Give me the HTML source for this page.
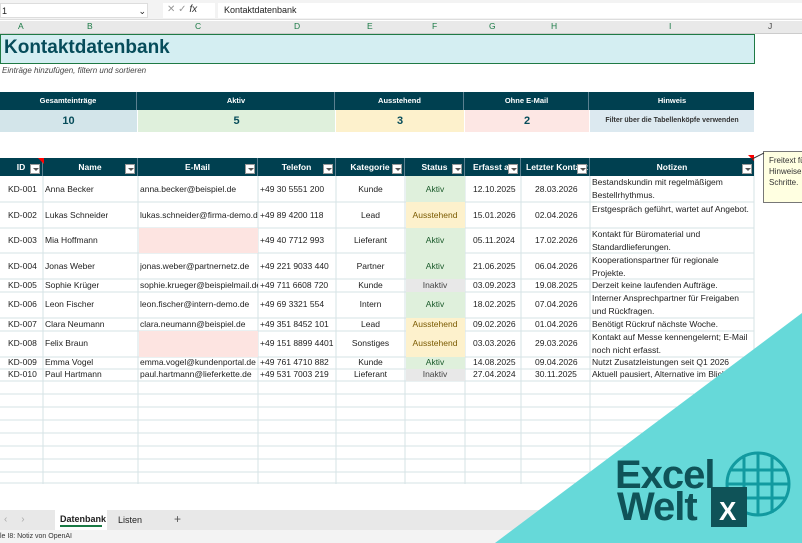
<!DOCTYPE html><html><head><style>
*{margin:0;padding:0;box-sizing:border-box}
body{width:802px;height:543px;overflow:hidden;background:#fff;font-family:"Liberation Sans",sans-serif;font-size:9px;color:#222;position:relative}
.a{position:absolute}
.hd{background:#004050;color:#fff;font-weight:bold;text-align:center}
.dd{position:absolute;right:2px;bottom:2px;width:10px;height:10px;background:#fff;border:1px solid #999}
.dd:after{content:"";position:absolute;left:2px;top:3px;border:3px solid transparent;border-top:3px solid #555}
.c{position:absolute;font-size:8.5px;white-space:nowrap;overflow:hidden}
</style></head><body>
<div class="a" style="left:0;top:0;width:802px;height:20px;background:#f3f3f3;border-bottom:1px solid #ddd"></div>
<div class="a" style="left:0;top:3px;width:148px;height:15px;background:#fff;border:1px solid #ddd;font-size:9px;padding:2px 1px">1<span style="float:right">⌄</span></div>
<div class="a" style="left:163px;top:3px;width:52px;height:15px;background:#fff;color:#999;font-size:10px;padding:1px 4px">✕ ✓ <i style="color:#333">fx</i></div>
<div class="a" style="left:218px;top:3px;width:584px;height:15px;background:#fff;font-size:9px;padding:2px 6px">Kontaktdatenbank</div>
<div class="a" style="left:0;top:21px;width:802px;height:13px;background:#e9e9e9;border-bottom:1px solid #ccc"></div>
<div class="a" style="left:0;top:21px;width:802px;height:13px;font-size:8.5px;color:#1a7a45">
<span class="a" style="left:18px">A</span><span class="a" style="left:87px">B</span><span class="a" style="left:195px">C</span><span class="a" style="left:294px">D</span><span class="a" style="left:367px">E</span><span class="a" style="left:432px">F</span><span class="a" style="left:489px">G</span><span class="a" style="left:551px">H</span><span class="a" style="left:669px">I</span><span class="a" style="left:768px;color:#444">J</span></div>
<div class="a" style="left:0;top:34px;width:755px;height:30px;background:#d4eef2;border:1.5px solid #1f7a45"></div>
<div class="a" style="left:4px;top:37px;font-size:19px;font-weight:bold;color:#064c5a">Kontaktdatenbank</div>
<div class="a" style="left:2px;top:66px;font-size:8px;font-style:italic;color:#444">Einträge hinzufügen, filtern und sortieren</div>
<!-- KPIs -->
<div class="a hd" style="left:0;top:92px;width:754px;height:18px"></div>
<div class="a" style="left:0;top:92px;width:754px;height:40px;font-size:7.5px;font-weight:bold">
<div class="a" style="left:0;top:0;width:137px;height:18px;color:#fff;text-align:center;line-height:18px;border-right:1px solid #5a8090">Gesamteinträge</div>
<div class="a" style="left:138px;top:0;width:197px;height:18px;color:#fff;text-align:center;line-height:18px;border-right:1px solid #5a8090">Aktiv</div>
<div class="a" style="left:336px;top:0;width:128px;height:18px;color:#fff;text-align:center;line-height:18px;border-right:1px solid #5a8090">Ausstehend</div>
<div class="a" style="left:465px;top:0;width:124px;height:18px;color:#fff;text-align:center;line-height:18px;border-right:1px solid #5a8090">Ohne E-Mail</div>
<div class="a" style="left:590px;top:0;width:164px;height:18px;color:#fff;text-align:center;line-height:18px">Hinweis</div>
<div class="a" style="left:0;top:18px;width:137px;height:22px;background:#d3e5ea;text-align:center;line-height:22px;font-size:11px;color:#064c5a">10</div>
<div class="a" style="left:138px;top:18px;width:197px;height:22px;background:#dff0dc;text-align:center;line-height:22px;font-size:11px;color:#064c5a">5</div>
<div class="a" style="left:336px;top:18px;width:128px;height:22px;background:#fdf1cc;text-align:center;line-height:22px;font-size:11px;color:#064c5a">3</div>
<div class="a" style="left:465px;top:18px;width:124px;height:22px;background:#fde7e4;text-align:center;line-height:22px;font-size:11px;color:#064c5a">2</div>
<div class="a" style="left:590px;top:18px;width:164px;height:22px;background:#dce9f0;text-align:center;line-height:22px;font-size:7px;color:#333">Filter über die Tabellenköpfe verwenden</div>
</div>
<!-- grid lines -->
<svg class="a" style="left:0;top:158px" width="760" height="326">
<g stroke="#d5e3e6" stroke-width="1">
<path d="M43 0V326M138 0V326M258 0V326M336 0V326M405 0V326M465 0V326M521 0V326M590 0V326M754 0V326"/>
<path d="M0 44H754M0 70H754M0 95H754M0 121H754M0 134H754M0 160H754M0 173H754M0 199H754M0 211H754M0 223H754M0 236H754M0 249H754M0 262H754M0 275H754M0 288H754M0 301H754M0 314H754M0 325H754"/>
</g></svg>
<!-- table header -->
<div class="a hd" style="left:0;top:158px;width:754px;height:18px;font-size:8.5px;line-height:18px">
<div class="a" style="left:0;width:43px;border-right:1px solid #5a8090;height:18px">ID<i class="dd"></i></div>
<div class="a" style="left:43px;width:95px;border-right:1px solid #5a8090;height:18px">Name<i class="dd"></i></div>
<div class="a" style="left:138px;width:120px;border-right:1px solid #5a8090;height:18px">E-Mail<i class="dd"></i></div>
<div class="a" style="left:258px;width:78px;border-right:1px solid #5a8090;height:18px">Telefon<i class="dd"></i></div>
<div class="a" style="left:336px;width:69px;border-right:1px solid #5a8090;height:18px">Kategorie<i class="dd"></i></div>
<div class="a" style="left:405px;width:60px;border-right:1px solid #5a8090;height:18px">Status<i class="dd"></i></div>
<div class="a" style="left:465px;width:56px;border-right:1px solid #5a8090;height:18px;text-align:left;padding-left:8px;overflow:hidden;white-space:nowrap">Erfasst am<i class="dd"></i></div>
<div class="a" style="left:521px;width:69px;border-right:1px solid #5a8090;height:18px;text-align:left;padding-left:5px;overflow:hidden;white-space:nowrap">Letzter Kontakt<i class="dd"></i></div>
<div class="a" style="left:590px;width:164px;height:18px">Notizen<i class="dd"></i></div>
</div>
<div class="a" style="left:38px;top:158px;border:3px solid transparent;border-top:3px solid red;border-right:3px solid red"></div>
<div class="a" style="left:748px;top:155px;border:3px solid transparent;border-top:3px solid red;border-right:3px solid red"></div>
<!-- rows -->
<div id="rows"></div>
<script></script>
<div class="a" style="left:0;top:176px;width:760px;height:210px">
<!-- status fills & empty emails -->
<div class="a" style="left:139px;top:52px;width:119px;height:25px;background:#fde4e1"></div>
<div class="a" style="left:139px;top:155px;width:119px;height:26px;background:#fde4e1"></div>
<div class="a" style="left:406px;top:0;width:59px;height:26px;background:#dff0dc"></div>
<div class="a" style="left:406px;top:26px;width:59px;height:26px;background:#fdf1cc"></div>
<div class="a" style="left:406px;top:52px;width:59px;height:25px;background:#dff0dc"></div>
<div class="a" style="left:406px;top:77px;width:59px;height:26px;background:#dff0dc"></div>
<div class="a" style="left:406px;top:103px;width:59px;height:13px;background:#e8e8e8"></div>
<div class="a" style="left:406px;top:116px;width:59px;height:26px;background:#dff0dc"></div>
<div class="a" style="left:406px;top:142px;width:59px;height:13px;background:#fdf1cc"></div>
<div class="a" style="left:406px;top:155px;width:59px;height:26px;background:#fdf1cc"></div>
<div class="a" style="left:406px;top:181px;width:59px;height:12px;background:#dff0dc"></div>
<div class="a" style="left:406px;top:193px;width:59px;height:12px;background:#e8e8e8"></div>
</div>
<div class="a" style="left:0;top:176px;width:760px;height:210px">
<!-- generated rows -->
<div class="a" style="top:8px;width:760px"><span class="c" style="left:8px">KD-001</span><span class="c" style="left:45px">Anna Becker</span><span class="c" style="left:140px;width:118px">anna.becker@beispiel.de</span><span class="c" style="left:260px">+49 30 5551 200</span><span class="c" style="left:336px;width:69px;text-align:center">Kunde</span><span class="c" style="left:405px;width:60px;text-align:center;color:#1a5a2a">Aktiv</span><span class="c" style="left:473px">12.10.2025</span><span class="c" style="left:535px">28.03.2026</span></div>
<div class="a" style="top:0;left:592px;font-size:8.5px;line-height:13px;width:160px">Bestandskundin mit regelmäßigem Bestellrhythmus.</div>
<div class="a" style="top:34px;width:760px"><span class="c" style="left:8px">KD-002</span><span class="c" style="left:45px">Lukas Schneider</span><span class="c" style="left:140px;width:118px">lukas.schneider@firma-demo.de</span><span class="c" style="left:260px">+49 89 4200 118</span><span class="c" style="left:336px;width:69px;text-align:center">Lead</span><span class="c" style="left:405px;width:60px;text-align:center;color:#7a5a00">Ausstehend</span><span class="c" style="left:473px">15.01.2026</span><span class="c" style="left:535px">02.04.2026</span></div>
<div class="a" style="top:27px;left:592px;font-size:8.5px;line-height:13px;width:160px">Erstgespräch geführt, wartet auf Angebot.</div>
<div class="a" style="top:59px;width:760px"><span class="c" style="left:8px">KD-003</span><span class="c" style="left:45px">Mia Hoffmann</span><span class="c" style="left:260px">+49 40 7712 993</span><span class="c" style="left:336px;width:69px;text-align:center">Lieferant</span><span class="c" style="left:405px;width:60px;text-align:center;color:#1a5a2a">Aktiv</span><span class="c" style="left:473px">05.11.2024</span><span class="c" style="left:535px">17.02.2026</span></div>
<div class="a" style="top:52px;left:592px;font-size:8.5px;line-height:13px;width:160px">Kontakt für Büromaterial und Standardlieferungen.</div>
<div class="a" style="top:85px;width:760px"><span class="c" style="left:8px">KD-004</span><span class="c" style="left:45px">Jonas Weber</span><span class="c" style="left:140px;width:118px">jonas.weber@partnernetz.de</span><span class="c" style="left:260px">+49 221 9033 440</span><span class="c" style="left:336px;width:69px;text-align:center">Partner</span><span class="c" style="left:405px;width:60px;text-align:center;color:#1a5a2a">Aktiv</span><span class="c" style="left:473px">21.06.2025</span><span class="c" style="left:535px">06.04.2026</span></div>
<div class="a" style="top:78px;left:592px;font-size:8.5px;line-height:13px;width:160px">Kooperationspartner für regionale Projekte.</div>
<div class="a" style="top:104px;width:760px"><span class="c" style="left:8px">KD-005</span><span class="c" style="left:45px">Sophie Krüger</span><span class="c" style="left:140px;width:118px">sophie.krueger@beispielmail.de</span><span class="c" style="left:260px">+49 711 6608 720</span><span class="c" style="left:336px;width:69px;text-align:center">Kunde</span><span class="c" style="left:405px;width:60px;text-align:center;color:#444">Inaktiv</span><span class="c" style="left:473px">03.09.2023</span><span class="c" style="left:535px">19.08.2025</span><span class="c" style="left:592px">Derzeit keine laufenden Aufträge.</span></div>
<div class="a" style="top:123px;width:760px"><span class="c" style="left:8px">KD-006</span><span class="c" style="left:45px">Leon Fischer</span><span class="c" style="left:140px;width:118px">leon.fischer@intern-demo.de</span><span class="c" style="left:260px">+49 69 3321 554</span><span class="c" style="left:336px;width:69px;text-align:center">Intern</span><span class="c" style="left:405px;width:60px;text-align:center;color:#1a5a2a">Aktiv</span><span class="c" style="left:473px">18.02.2025</span><span class="c" style="left:535px">07.04.2026</span></div>
<div class="a" style="top:116px;left:592px;font-size:8.5px;line-height:13px;width:160px">Interner Ansprechpartner für Freigaben und Rückfragen.</div>
<div class="a" style="top:143px;width:760px"><span class="c" style="left:8px">KD-007</span><span class="c" style="left:45px">Clara Neumann</span><span class="c" style="left:140px;width:118px">clara.neumann@beispiel.de</span><span class="c" style="left:260px">+49 351 8452 101</span><span class="c" style="left:336px;width:69px;text-align:center">Lead</span><span class="c" style="left:405px;width:60px;text-align:center;color:#7a5a00">Ausstehend</span><span class="c" style="left:473px">09.02.2026</span><span class="c" style="left:535px">01.04.2026</span><span class="c" style="left:592px">Benötigt Rückruf nächste Woche.</span></div>
<div class="a" style="top:162px;width:760px"><span class="c" style="left:8px">KD-008</span><span class="c" style="left:45px">Felix Braun</span><span class="c" style="left:260px">+49 151 8899 4401</span><span class="c" style="left:336px;width:69px;text-align:center">Sonstiges</span><span class="c" style="left:405px;width:60px;text-align:center;color:#7a5a00">Ausstehend</span><span class="c" style="left:473px">03.03.2026</span><span class="c" style="left:535px">29.03.2026</span></div>
<div class="a" style="top:155px;left:592px;font-size:8.5px;line-height:13px;width:160px">Kontakt auf Messe kennengelernt; E-Mail noch nicht erfasst.</div>
<div class="a" style="top:181px;width:760px"><span class="c" style="left:8px">KD-009</span><span class="c" style="left:45px">Emma Vogel</span><span class="c" style="left:140px;width:118px">emma.vogel@kundenportal.de</span><span class="c" style="left:260px">+49 761 4710 882</span><span class="c" style="left:336px;width:69px;text-align:center">Kunde</span><span class="c" style="left:405px;width:60px;text-align:center;color:#1a5a2a">Aktiv</span><span class="c" style="left:473px">14.08.2025</span><span class="c" style="left:535px">09.04.2026</span><span class="c" style="left:592px">Nutzt Zusatzleistungen seit Q1 2026</span></div>
<div class="a" style="top:193px;width:760px"><span class="c" style="left:8px">KD-010</span><span class="c" style="left:45px">Paul Hartmann</span><span class="c" style="left:140px;width:118px">paul.hartmann@lieferkette.de</span><span class="c" style="left:260px">+49 531 7003 219</span><span class="c" style="left:336px;width:69px;text-align:center">Lieferant</span><span class="c" style="left:405px;width:60px;text-align:center;color:#444">Inaktiv</span><span class="c" style="left:473px">27.04.2024</span><span class="c" style="left:535px">30.11.2025</span><span class="c" style="left:592px">Aktuell pausiert, Alternative im Blick</span></div>
</div>
<!-- note -->
<div class="a" style="left:763px;top:151px;width:50px;height:52px;background:#ffffe1;border:1px solid #777;font-size:8px;padding:3px 5px;line-height:11px;color:#333;white-space:nowrap;overflow:hidden">Freitext für<br>Hinweise<br>Schritte.</div>
<svg class="a" style="left:750px;top:150px" width="16" height="12"><path d="M2 9L14 3" stroke="#333"/></svg>
<!-- tabs -->
<div class="a" style="left:0;top:510px;width:802px;height:20px;background:#e8e8e8"></div>
<div class="a" style="left:4px;top:514px;color:#aaa;font-size:10px">‹ &nbsp;&nbsp;&nbsp; ›</div>
<div class="a" style="left:55px;top:510px;width:52px;height:20px;background:#fff;font-size:9px;font-weight:bold;padding:4px 5px">Datenbank<div style="height:2px;background:#1a7a45;margin-top:1px"></div></div>
<div class="a" style="left:118px;top:515px;font-size:9px">Listen</div>
<div class="a" style="left:174px;top:512px;font-size:12px;color:#555">+</div>
<div class="a" style="left:0;top:530px;width:802px;height:13px;background:#f3f3f3;font-size:7px;padding:3px 0 0 0;color:#333">le I8: Notiz von OpenAI</div>
<!-- logo -->
<svg class="a" style="left:0;top:0" width="802" height="543">
<polygon points="802,313 802,543 495,543" fill="#66d9d9"/>
<g fill="#0f5358" font-family="Liberation Sans" font-weight="bold">
<text x="615" y="488" font-size="40" letter-spacing="-1">Excel</text>
<text x="617" y="520" font-size="40" letter-spacing="-1">Welt</text>
</g>
<g stroke="#129aa0" stroke-width="3" fill="none">
<circle cx="758" cy="484" r="31"/>
<path d="M727 484H789M731 470H785M731 498H785M744 455V513M758 453V515M772 455V513"/>
</g>
<rect x="711" y="487" width="36" height="40" fill="#0f5358"/>
<text x="719" y="520" font-family="Liberation Sans" font-weight="bold" font-size="26" fill="#fff">X</text>
</svg>
</body></html>
